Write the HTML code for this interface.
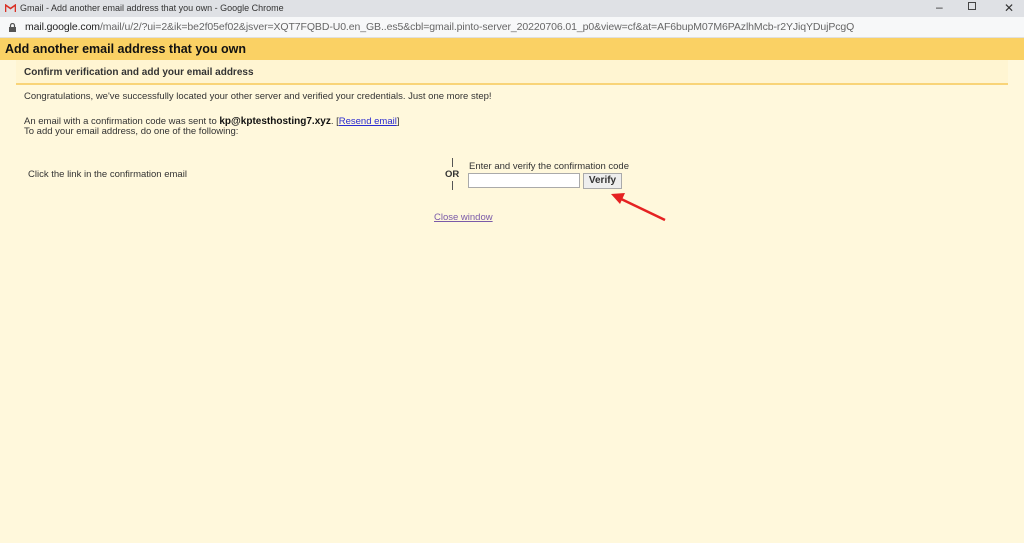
<!DOCTYPE html>
<html><head><meta charset="utf-8"><style>
*{margin:0;padding:0;box-sizing:border-box}
body{width:1024px;height:543px;overflow:hidden;background:#fff8dc;font-family:"Liberation Sans",Arial,sans-serif;font-size:10px;color:#222;position:relative}
.tb{position:absolute;left:0;top:0;width:1024px;height:17px;background:#dfe1e5;font-size:9px;color:#333}
.ab{position:absolute;left:0;top:17px;width:1024px;height:21px;background:#f7f8f9;border-bottom:1px solid #e0e0e0;font-size:10.5px;color:#666;letter-spacing:-0.1px}
.hd{position:absolute;left:0;top:38px;width:1024px;height:22px;background:#fad164;font-weight:bold;font-size:12.5px;color:#111;padding:4px 0 0 5px}
.sh{position:absolute;left:16px;top:60px;width:992px;height:25px;background:#fff5d2;border-bottom:2px solid #f9d478;font-weight:bold;font-size:10px;padding:7px 0 0 8px;color:#333}
.t{position:absolute;font-size:9.5px;color:#333;white-space:nowrap}
a{color:#2a2ad0}
</style></head><body>
<div class="tb">
<svg style="position:absolute;left:5px;top:4px" width="11" height="8" viewBox="0 0 11 8"><path d="M0.5 8V1L5.5 4.5L10.5 1V8" fill="none" stroke="#d93025" stroke-width="1.6"/></svg>
<span style="position:absolute;left:20px;top:3px">Gmail - Add another email address that you own - Google Chrome</span>
<span style="position:absolute;left:936px;top:0px;font-size:12px">–</span>
<span style="position:absolute;left:968px;top:2px;width:8px;height:8px;border:1.3px solid #444"></span>
<span style="position:absolute;left:1004px;top:1px;font-size:12px">✕</span>
</div>
<div class="ab">
<svg style="position:absolute;left:9px;top:6px" width="7" height="9" viewBox="0 0 7 9"><rect x="0" y="4" width="7" height="5" fill="#555"/><path d="M1.5 4V2.5a2 2 0 0 1 4 0V4" fill="none" stroke="#555" stroke-width="1.2"/></svg>
<span style="position:absolute;left:25px;top:4px"><span style="color:#222">mail.google.com</span>/mail/u/2/?ui=2&amp;ik=be2f05ef02&amp;jsver=XQT7FQBD-U0.en_GB..es5&amp;cbl=gmail.pinto-server_20220706.01_p0&amp;view=cf&amp;at=AF6bupM07M6PAzlhMcb-r2YJiqYDujPcgQ</span>
</div>
<div class="hd">Add another email address that you own</div>
<div class="sh">Confirm verification and add your email address</div>
<div class="t" style="left:24px;top:91px">Congratulations, we've successfully located your other server and verified your credentials. Just one more step!</div>
<div class="t" style="left:24px;top:116px">An email with a confirmation code was sent to <b style="color:#111;font-size:10px">kp@kptesthosting7.xyz</b>. [<a href="#">Resend email</a>]</div>
<div class="t" style="left:24px;top:126px">To add your email address, do one of the following:</div>
<div class="t" style="left:28px;top:169px">Click the link in the confirmation email</div>
<div style="position:absolute;left:452px;top:158px;width:1px;height:9px;background:#555"></div>
<div class="t" style="left:445px;top:169px;font-weight:bold">OR</div>
<div style="position:absolute;left:452px;top:181px;width:1px;height:9px;background:#555"></div>
<div class="t" style="left:469px;top:161px">Enter and verify the confirmation code</div>
<div style="position:absolute;left:468px;top:173px;width:112px;height:15px;background:#fff;border:1px solid #aaa"></div>
<div style="position:absolute;left:583px;top:173px;width:39px;height:16px;background:#eee;border:1px solid #aaa;font-weight:bold;font-size:10px;text-align:center;line-height:14px;color:#333">Verify</div>
<svg style="position:absolute;left:605px;top:190px" width="64" height="34" viewBox="0 0 64 34"><line x1="60" y1="30" x2="12" y2="7" stroke="#e52222" stroke-width="2.5"/><path d="M6 4L20 3L15 14Z" fill="#e52222"/></svg>
<div class="t" style="left:434px;top:212px"><a href="#" style="color:#7a5aa8">Close window</a></div>
</body></html>
